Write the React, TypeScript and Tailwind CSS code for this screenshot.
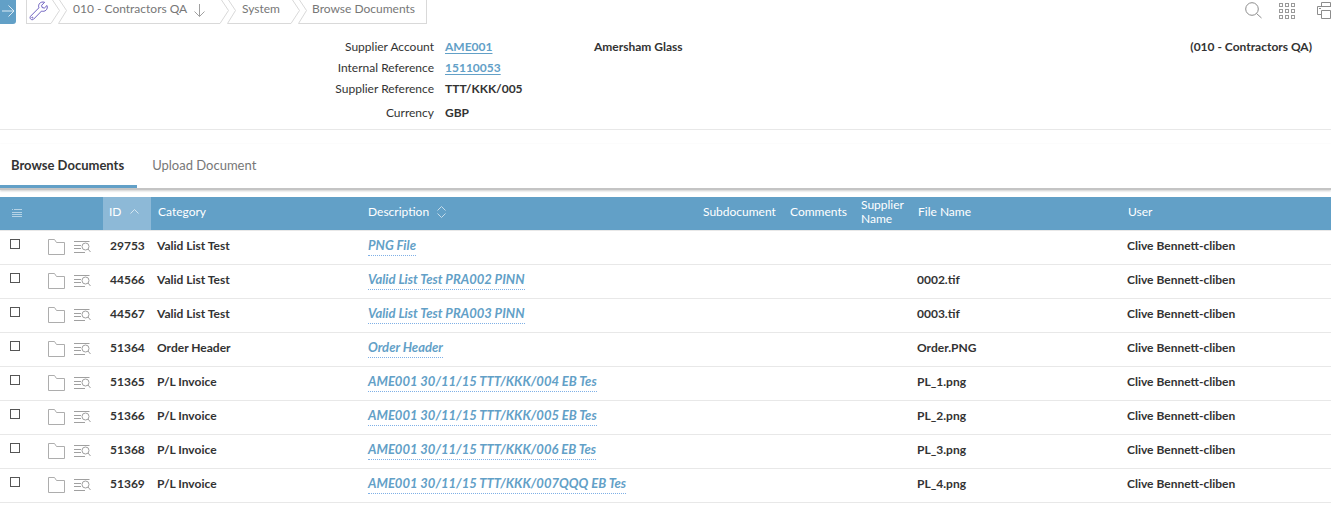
import type { ReactNode } from "react";

type Doc = { id: string; category: string; description: string; file?: string };

const docs: Doc[] = [
  { id: "29753", category: "Valid List Test", description: "PNG File" },
  { id: "44566", category: "Valid List Test", description: "Valid List Test PRA002 PINN", file: "0002.tif" },
  { id: "44567", category: "Valid List Test", description: "Valid List Test PRA003 PINN", file: "0003.tif" },
  { id: "51364", category: "Order Header", description: "Order Header", file: "Order.PNG" },
  { id: "51365", category: "P/L Invoice", description: "AME001 30/11/15 TTT/KKK/004 EB Tes", file: "PL_1.png" },
  { id: "51366", category: "P/L Invoice", description: "AME001 30/11/15 TTT/KKK/005 EB Tes", file: "PL_2.png" },
  { id: "51368", category: "P/L Invoice", description: "AME001 30/11/15 TTT/KKK/006 EB Tes", file: "PL_3.png" },
  { id: "51369", category: "P/L Invoice", description: "AME001 30/11/15 TTT/KKK/007QQQ EB Tes", file: "PL_4.png" },
];

function CrumbDivider() {
  return (
    <svg className="h-6 w-4 shrink-0" viewBox="0 0 16 24" fill="none" stroke="#d9d9d9" aria-hidden="true">
      <path d="M0 23.5L8.5 10.5L1.5 0" />
      <path d="M16 23.5H7.5L15.5 10.5L8.5 0" />
    </svg>
  );
}

function Crumb({ children, className = "" }: { children: ReactNode; className?: string }) {
  return <li className={"flex h-6 border-b border-[#d9d9d9] " + className}>{children}</li>;
}

function WrenchIcon() {
  return (
    <svg className="size-5" viewBox="0 0 20 20" fill="none" stroke="#6d5fc0" strokeLinejoin="round" aria-hidden="true">
      <path d="M15.6 1.3C13.6 .6 11.4 1.2 10.3 2.8C9.5 4 9.4 5.5 9.9 6.8L1.6 15.2C.9 16 .9 17.3 1.7 18.1C2.5 18.9 3.8 18.9 4.6 18.2L12.6 10C14 10.6 15.7 10.3 16.9 9.3C18.2 8.1 18.7 6.2 18 4.5L15.3 7.1L13.1 6.5L12.6 4.3Z" />
      <circle cx="3.3" cy="16.6" r=".5" />
    </svg>
  );
}

function FolderIcon() {
  return (
    <svg className="h-4 w-[18px]" viewBox="0 0 18 16" fill="none" stroke="#adadad" aria-hidden="true">
      <path d="M.5 .5H6.5L8.5 3.5H16.5V15.5H.5Z" />
    </svg>
  );
}

function DetailIcon() {
  return (
    <svg className="h-[14px] w-[18px]" viewBox="0 0 18 14" fill="none" stroke="#a0a0a0" aria-hidden="true">
      <path d="M0 1.5H15.5M0 5.5H7M0 8.5H7M0 12.5H11" />
      <circle cx="11.5" cy="6.5" r="3.5" />
      <path d="M14 9L16.5 12" />
    </svg>
  );
}

function Field({ label, children, gap = "" }: { label: string; children: ReactNode; gap?: string }) {
  return (
    <div className={"flex leading-[21px] " + gap}>
      <dt className="w-[434px] shrink-0 text-right">{label}</dt>
      <dd className="w-[149px] shrink-0 pl-[11px] font-bold">{children}</dd>
    </div>
  );
}

const refLink = "text-[#62a0c7] underline underline-offset-2";
const gridStops = [1.5, 7.5, 13.5];

export default function App() {
  return (
    <div className="min-h-screen bg-white font-['Lato',sans-serif] text-[12px] text-[#333]">
      <header className="flex items-start">
        <button aria-label="Expand menu" className="flex h-6 w-4 items-center justify-center rounded-br-[3px] bg-[#62a0c7] pb-0.5">
          <svg className="h-3 w-3.5" viewBox="0 0 14 12" fill="none" stroke="#dcebf4" aria-hidden="true">
            <path d="M1 6H12.5M7.5 .5L13 6L7.5 11.5" />
          </svg>
        </button>
        <nav aria-label="Breadcrumb" className="ml-2.5 leading-[18px] text-[#777]">
          <ol className="flex">
            <Crumb className="w-[25px] border-l">
              <a href="#tools" aria-label="Tools" className="pl-[2px] pt-px">
                <WrenchIcon />
              </a>
            </Crumb>
            <CrumbDivider />
            <Crumb className="w-[153px] pl-[6px]">
              <a href="#company" className="flex gap-1.5 whitespace-nowrap">
                010 - Contractors QA
                <svg className="mt-1 h-[14px] w-3" viewBox="0 0 12 14" fill="none" stroke="#a0a0a0" aria-hidden="true">
                  <path d="M6.5 0V12.5M1.5 7.5L6.5 12.5L11.5 7.5" />
                </svg>
              </a>
            </Crumb>
            <CrumbDivider />
            <Crumb className="w-[55px] pl-[6px]">
              <a href="#system">System</a>
            </Crumb>
            <CrumbDivider />
            <Crumb className="w-[120px] border-r pl-[5px]">
              <a href="#browse" aria-current="page">Browse Documents</a>
            </Crumb>
          </ol>
        </nav>
        <div className="ml-auto flex h-6 items-start gap-[17px] overflow-hidden pt-0.5">
          <button aria-label="Search">
            <svg className="size-[17px]" viewBox="0 0 17 17" fill="none" stroke="#8c8c8c" aria-hidden="true">
              <circle cx="7" cy="7" r="6.3" />
              <path d="M11.5 11.5L16.5 16" />
            </svg>
          </button>
          <button aria-label="Applications">
            <svg className="size-[17px]" viewBox="0 0 17 17" fill="none" stroke="#9a9a9a" aria-hidden="true">
              {gridStops.map((y) =>
                gridStops.map((x) => <rect key={x + "-" + y} x={x - 1} y={y} width="3" height="3" />)
              )}
            </svg>
          </button>
          <button aria-label="Print" className="-mr-1 ml-1">
            <svg className="size-[18px]" viewBox="0 0 18 18" fill="none" stroke="#8c8c8c" aria-hidden="true">
              <path d="M4.5 4.5V.5H13.5V4.5M4.5 12.5H.5V4.5H17.5V12.5H13.5M4.5 8.5H13.5V16.5H4.5ZM2 6.5H4" />
            </svg>
          </button>
        </div>
      </header>

      <section className="flex justify-between border-b border-[#e8e8e8] pb-[6px] pr-[19px] pt-3">
        <div className="flex">
          <dl>
            <Field label="Supplier Account"><a href="#account" className={refLink}>AME001</a></Field>
            <Field label="Internal Reference"><a href="#reference" className={refLink}>15110053</a></Field>
            <Field label="Supplier Reference">TTT/KKK/005</Field>
            <Field label="Currency" gap="mt-[3px]">GBP</Field>
          </dl>
          <p className="pl-[11px] font-bold leading-[21px]">Amersham Glass</p>
        </div>
        <p className="font-bold leading-[21px]">(010 - Contractors QA)</p>
      </section>

      <div role="tablist" className="mt-[14px] flex border-b-2 border-[#c4c4c4] text-[13px] shadow-[0_1px_2px_rgba(0,0,0,0.2)]">
        <button role="tab" aria-selected="true" className="h-11 border-b-[3px] border-[#62a0c7] pl-[11px] pr-[13px] pt-0.5 font-bold">
          Browse Documents
        </button>
        <button role="tab" aria-selected="false" className="h-11 border-b-[3px] border-transparent px-[15px] pt-0.5 text-[#777]">
          Upload Document
        </button>
      </div>

      <table className="mt-[7px] w-full table-fixed border-collapse text-left">
        <colgroup>
          <col className="w-10" />
          <col className="w-[63px]" />
          <col className="w-12" />
          <col className="w-[210px]" />
          <col className="w-[335px]" />
          <col className="w-[87px]" />
          <col className="w-[71px]" />
          <col className="w-[57px]" />
          <col className="w-[210px]" />
          <col />
        </colgroup>
        <thead>
          <tr className="h-[33px] border-b border-[#e8e8e8] bg-[#62a0c7] leading-[14px] text-white [&>th]:p-0 [&>th]:pb-[3px] [&>th]:pl-[7px] [&>th]:font-normal">
            <th>
              <button aria-label="Table options" className="ml-[5px] mt-0.5 block">
                <svg className="h-2 w-2.5" viewBox="0 0 10 8" stroke="#b5d3e6" aria-hidden="true">
                  <path d="M0 .5H1M2 .5H10M0 3.5H10M0 5.5H10M0 7.5H10" />
                </svg>
              </button>
            </th>
            <th aria-label="Actions" />
            <th className="bg-[#8db9d7]" aria-sort="ascending">
              <button className="-ml-px flex items-center gap-2">
                ID
                <svg className="h-[5px] w-[9px]" viewBox="0 0 9 5" fill="none" stroke="#d5e6f1" aria-hidden="true">
                  <path d="M.5 4.5L4.5 .5L8.5 4.5" />
                </svg>
              </button>
            </th>
            <th>Category</th>
            <th>
              <button className="flex items-center gap-2">
                Description
                <svg className="h-3 w-[9px]" viewBox="0 0 9 12" fill="none" stroke="#c5dcea" aria-hidden="true">
                  <path d="M.5 4.5L4.5 .5L8.5 4.5M.5 7.5L4.5 11.5L8.5 7.5" />
                </svg>
              </button>
            </th>
            <th>Subdocument</th>
            <th>Comments</th>
            <th>Supplier Name</th>
            <th>File Name</th>
            <th>User</th>
          </tr>
        </thead>
        <tbody>
          {docs.map((d) => (
            <tr key={d.id} className="h-[34px] border-b border-[#e8e8e8] font-bold [&>td]:p-0 [&>td]:pb-0.5 [&>td]:pl-[6px]">
              <td>
                <input
                  type="checkbox"
                  aria-label={"Select document " + d.id}
                  className="mb-1 ml-1 block size-2.5 appearance-none border border-[#555] bg-white checked:bg-[#62a0c7]"
                />
              </td>
              <td>
                <div className="flex items-center gap-2 pl-0.5 pt-px">
                  <button aria-label={"Open folder for " + d.id}><FolderIcon /></button>
                  <button aria-label={"View details of " + d.id}><DetailIcon /></button>
                </div>
              </td>
              <td><span className="pl-px">{d.id}</span></td>
              <td>{d.category}</td>
              <td>
                <a href={"#" + d.id} className="ml-px inline-block border-b border-dotted border-[#7fb0e6] pb-px text-[13px] italic leading-[18px] text-[#62a0c7]">
                  {d.description}
                </a>
              </td>
              <td />
              <td />
              <td />
              <td>{d.file}</td>
              <td>Clive Bennett-cliben</td>
            </tr>
          ))}
        </tbody>
      </table>
    </div>
  );
}
